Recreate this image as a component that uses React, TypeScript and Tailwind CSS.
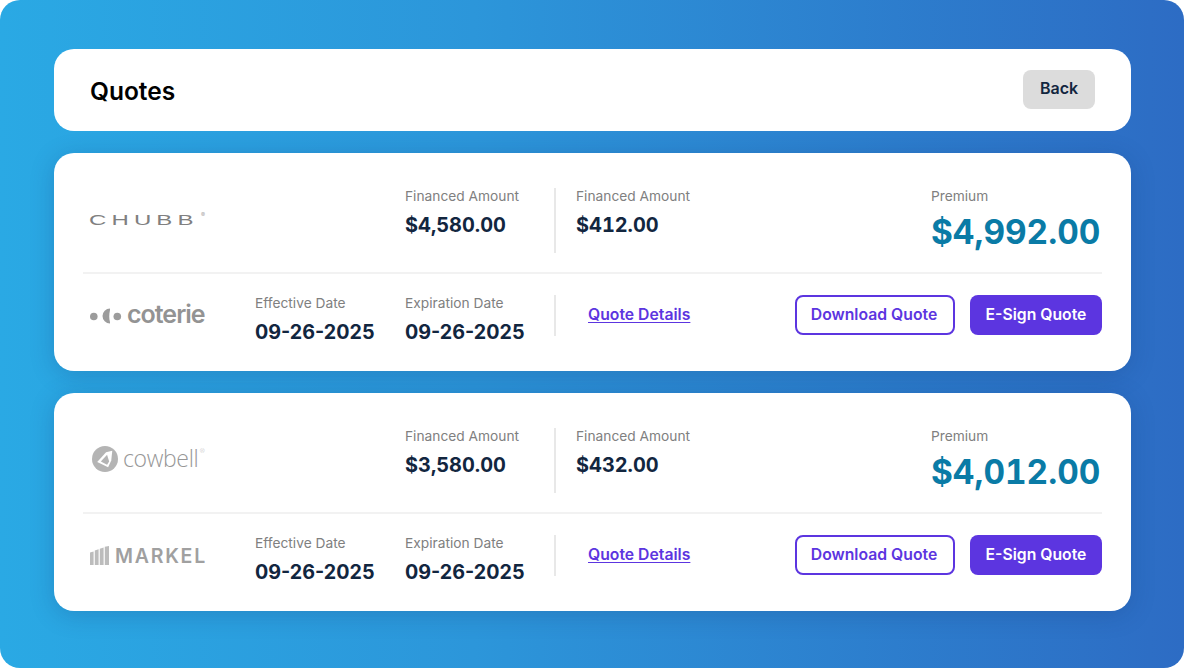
import React from "react";

function Chubb() {
  return (
    <div className="relative h-[20px] w-[130px] flex items-center pl-[6px] mt-[1px]">
      <span className="font-['Liberation_Sans',sans-serif] text-[15px] leading-none text-[#808080] tracking-[3.2px] scale-x-[1.6] origin-left whitespace-nowrap">
        CHUBB
      </span>
      <span className="absolute left-[118px] top-[2px] text-[6px] leading-none text-[#a8a8a8]">®</span>
    </div>
  );
}

function Coterie() {
  return (
    <div className="flex items-center pl-[7px] h-[30px]">
      <svg width="36" height="18" viewBox="0 0 36 18" className="shrink-0">
        <circle cx="3.8" cy="9.5" r="3.8" fill="#9c9c9c" />
        <path d="M20 1.5 A7.5 7.5 0 0 0 20 16.5 L20 15 C19 12 19 7 20 3 Z" fill="#9c9c9c" />
        <circle cx="27.3" cy="9.5" r="3.8" fill="#9c9c9c" />
      </svg>
      <span className="font-['Inter',sans-serif] font-semibold text-[25px] leading-none tracking-[-0.04em] text-[#939393] -mt-[2px] ml-[1px]">
        coterie
      </span>
    </div>
  );
}

function Cowbell() {
  return (
    <div className="flex items-center pl-[9px] gap-[5px] h-[30px]">
      <svg width="26" height="26" viewBox="0 0 25 25" className="shrink-0">
        <circle cx="12.5" cy="12.5" r="12.5" fill="#b4b4b4" />
        <path d="M5 15.5 L13.5 6 L19.5 4.5 L18.5 14 L15.5 20.5 Z" fill="#ffffff" />
        <path d="M8.5 15 L14.5 8.5 L16.5 15 L14.5 18 Z" fill="#b4b4b4" />
      </svg>
      <span className="font-['Open_Sans',sans-serif] font-light text-[23px] leading-none tracking-[-0.015em] text-[#979797] -mt-[2px] relative">
        cowbell
        <span className="absolute -right-[6px] top-[1px] text-[6px] text-[#a8a8a8]">®</span>
      </span>
    </div>
  );
}

function Markel() {
  return (
    <div className="flex items-center pl-[7px] gap-[6px] h-[30px]">
      <svg width="19" height="19" viewBox="0 0 19 19" className="shrink-0 -mt-[1px]">
        <path d="M0 6.5 L3.6 5.5 V19 H0 Z M4.8 4.6 L8.6 3.2 V19 H4.8 Z M9.8 2.8 L13.6 1.4 V19 H9.8 Z M14.8 0.8 L19 0 V19 H14.8 Z" fill="#bcbcbc" />
      </svg>
      <span className="font-['Inter',sans-serif] font-semibold text-[19.5px] leading-none tracking-[0.09em] text-[#a0a0a0] mt-[2px]">
        MARKEL
      </span>
    </div>
  );
}

function Label({ children }: { children: React.ReactNode }) {
  return <div className="text-[13.75px] leading-[16px] text-[#808080]">{children}</div>;
}

function Quote({
  logoA,
  logoB,
  a,
  b,
  total,
}: {
  logoA: React.ReactNode;
  logoB: React.ReactNode;
  a: string;
  b: string;
  total: string;
}) {
  const amount = "mt-[9px] text-[19.9px] leading-[24px] font-bold tabular-nums text-[#12263f] whitespace-nowrap";
  const date = "mt-[9px] text-[19.7px] leading-[24px] font-bold text-[#12263f] whitespace-nowrap";
  return (
    <section className="bg-white rounded-[20px] h-[218px] px-[29px] shadow-[0_4px_24px_rgba(20,50,110,0.22)] flex flex-col">
      <div className="h-[121px] border-b-2 border-b-[#f2f2f2] flex items-start">
        <div className="w-[322px] h-[119px] flex items-center pt-[13px]">{logoA}</div>
        <div className="w-[149px] pt-[35px]">
          <Label>Financed Amount</Label>
          <div className={amount}>{a}</div>
        </div>
        <div className="w-[377px] mt-[35px] h-[65px] border-l-2 border-l-[#e8e8e8] pl-[20px]">
          <Label>Financed Amount</Label>
          <div className={amount}>{b}</div>
        </div>
        <div className="pt-[35px]">
          <Label>Premium</Label>
          <div className="mt-[8px] text-[33.4px] leading-[40px] font-bold tabular-nums text-[#0a7ba6] whitespace-nowrap">{total}</div>
        </div>
      </div>
      <div className="flex items-start pt-[21px]">
        <div className="w-[172px] h-[41px] flex items-center">{logoB}</div>
        <div className="w-[150px]">
          <Label>Effective Date</Label>
          <div className={date}>09-26-2025</div>
        </div>
        <div className="w-[149px]">
          <Label>Expiration Date</Label>
          <div className={date}>09-26-2025</div>
        </div>
        <div className="border-l-2 border-l-[#e8e8e8] h-[41px] pl-[32px] pb-[2px] flex items-center">
          <a className="text-[15.75px] leading-[19px] font-semibold text-[#5c35e0] underline underline-offset-2 decoration-1">Quote Details</a>
        </div>
        <div className="ml-auto flex gap-[15px]">
          <button className="w-[160px] h-[40px] pb-[1px] pr-[2px] rounded-[8px] border-2 border-[#5c35e0] bg-white text-[15.75px] font-semibold text-[#5c35e0]">Download Quote</button>
          <button className="w-[132px] h-[40px] pb-[1px] rounded-[8px] bg-[#5c35e0] text-[15.75px] font-semibold text-white">E-Sign Quote</button>
        </div>
      </div>
    </section>
  );
}

export default function App() {
  return (
    <div className="font-['Inter',sans-serif] w-[1184px] h-[669px] bg-white">
      <div className="w-[1184px] h-[668px] rounded-[20px] bg-[linear-gradient(90deg,#2aa9e4_0%,#2c96da_40%,#2d6cc4_100%)] pl-[54px] pr-[53px] pt-[49px] flex flex-col gap-[22px]">
        <header className="h-[82px] bg-white rounded-[20px] px-[36px] flex items-center justify-between">
          <h1 className="text-[24.5px] font-semibold text-black leading-none mt-[3px]">Quotes</h1>
          <button className="w-[72px] h-[39px] rounded-[8px] bg-[#dcdcdc] text-[16px] font-semibold text-[#12263f] -mt-[2px] pb-[2px]">Back</button>
        </header>
        <Quote logoA={<Chubb />} logoB={<Coterie />} a="$4,580.00" b="$412.00" total="$4,992.00" />
        <Quote logoA={<Cowbell />} logoB={<Markel />} a="$3,580.00" b="$432.00" total="$4,012.00" />
      </div>
    </div>
  );
}
